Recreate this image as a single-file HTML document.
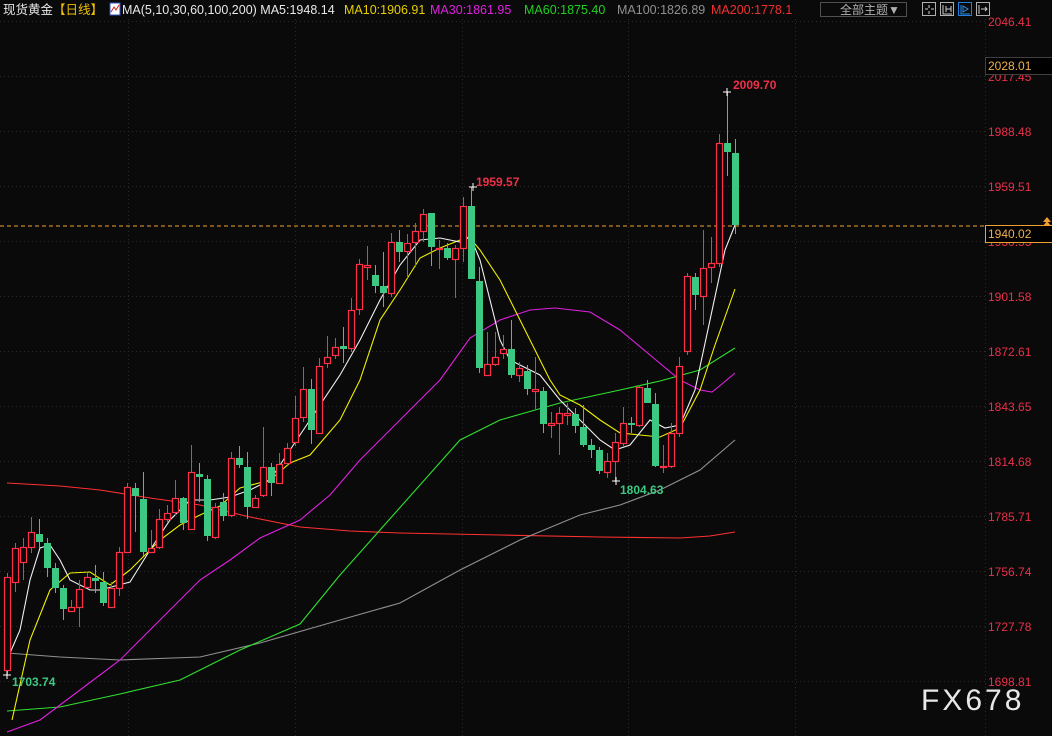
<!DOCTYPE html>
<html><head><meta charset="utf-8">
<style>
html,body{margin:0;padding:0;background:#0a0a0a;width:1052px;height:736px;overflow:hidden}
svg{display:block}
text{font-family:"Liberation Sans","Noto Sans CJK SC",sans-serif}
</style></head>
<body>
<svg id="s" width="1052" height="736" xmlns="http://www.w3.org/2000/svg">
<rect width="1052" height="736" fill="#0a0a0a"/>
<g id="grid"></g>
<line x1="0" y1="226" x2="985" y2="226" stroke="#f0a030" stroke-dasharray="4,3" stroke-width="1"/>
<g id="ma"></g>
<g id="c"></g>
<!-- header -->
<rect x="0" y="0" width="1052" height="19" fill="#0a0a0a"/>
<text x="3" y="14" font-size="12.5" fill="#e8e8e8">现货黄金</text>
<text x="53" y="14" font-size="12.5" fill="#f0c000">【日线】</text>
<rect x="110" y="3" width="10" height="12" fill="#fff" stroke="#3050c0"/>
<polyline points="111,12 114,7 116,10 119,5" fill="none" stroke="#d02020" stroke-width="1"/>
<text x="122" y="14" font-size="12.5" fill="#e8e8e8">MA(5,10,30,60,100,200) MA5:1948.14</text>
<text x="344" y="14" font-size="12.5" fill="#e8d000">MA10:1906.91</text>
<text x="430" y="14" font-size="12.5" fill="#e020e0">MA30:1861.95</text>
<text x="524" y="14" font-size="12.5" fill="#20d020">MA60:1875.40</text>
<text x="617" y="14" font-size="12.5" fill="#909090">MA100:1826.89</text>
<text x="711" y="14" font-size="12.5" fill="#f03030">MA200:1778.1</text>
<rect x="820.5" y="2.5" width="86" height="14" fill="#0a0a0a" stroke="#505050"/>
<text x="840" y="14" font-size="12" fill="#b0b0b0">全部主题▼</text>
<rect x="922.5" y="2.5" width="13" height="13" fill="none" stroke="#b0b0b0"/>
<path d="M929 5v3M929 11v3M925 9h3M931 9h3" stroke="#ccc"/>
<rect x="940.5" y="2.5" width="13" height="13" fill="none" stroke="#b0b0b0"/>
<path d="M943 5v9h9M946 6v6M951 6v6M946 9h5" stroke="#ccc" fill="none"/>
<rect x="958.5" y="2.5" width="13" height="13" fill="none" stroke="#2080e0"/>
<path d="M961 5v9h9M963 6l5 3-5 3z" stroke="#2a90f0" fill="none"/>
<rect x="976.5" y="2.5" width="13" height="13" fill="none" stroke="#b0b0b0"/>
<path d="M979 5v9M981 9h6M985 7l2 2-2 2" stroke="#ccc" fill="none"/>
<!-- axis -->
<g font-size="12" fill="#e8304a" id="ax"></g>
<rect x="985.5" y="57.5" width="67" height="17" fill="#000" stroke="#404040"/>
<text x="988" y="70" font-size="12" fill="#f0b050">2028.01</text>
<rect x="985.5" y="225.5" width="67" height="17" fill="#000" stroke="#f0a030"/>
<text x="988" y="238" font-size="12" fill="#f0b050">1940.02</text>
<path d="M1043 222l4-5 4 5zM1043 226l4-5 4 5z" fill="#f0a030"/>
<!-- annotations -->
<text x="12" y="686" font-size="12" font-weight="bold" fill="#3cc882">1703.74</text>
<text x="476" y="186" font-size="12" font-weight="bold" fill="#f03048">1959.57</text>
<text x="620" y="494" font-size="12" font-weight="bold" fill="#3cc882">1804.63</text>
<text x="733" y="89" font-size="12" font-weight="bold" fill="#f03048">2009.70</text>
<path d="M3 675h8M7 671v8M469 187h8M473 183v8M612 481h8M616 477v8M723 92h8M727 88v8" stroke="#fff" stroke-width="1"/>
<text x="921" y="710" font-size="30" fill="#e8e8e8" letter-spacing="3">FX678</text>
</svg>
<script>
var NS="http://www.w3.org/2000/svg";
function el(p,t,a){var e=document.createElementNS(NS,t);for(var k in a)e.setAttribute(k,a[k]);p.appendChild(e);return e;}
var g=document.getElementById('grid');
for(var i=0;i<13;i++){var y=22+55*i;el(g,'line',{x1:0,y1:y-0.5,x2:985,y2:y-0.5,stroke:'#2a2a2a','stroke-dasharray':'1,3'});}
[128,295,462,628,795].forEach(function(x){el(g,'line',{x1:x+.5,y1:19,x2:x+.5,y2:736,stroke:'#2a2a2a','stroke-dasharray':'1,3'});});
el(g,'line',{x1:985.5,y1:19,x2:985.5,y2:736,stroke:'#2a2a2a','stroke-dasharray':'1,3'});
var ax=document.getElementById('ax');
var labs=["2046.41","2017.45","1988.48","1959.51","1930.55","1901.58","1872.61","1843.65","1814.68","1785.71","1756.74","1727.78","1698.81"];
labs.forEach(function(l,i){var t=el(ax,'text',{x:988,y:26+55*i});t.textContent=l;});
// [bodyTop, bodyBot, high, low, up?]
var C=[[577,670,573,675,1],[548,582,543,592,1],[547,562,538,580,1],[532,547,517,553,1],[534,542,519,548,0],[543,568,538,577,0],[568,588,563,593,0],[588,609,585,620,0],[607,611,600,612,1],[589,607,580,627,1],
[577,587,573,588,1],[578,581,565,593,0],[582,603,572,606,0],[588,607,582,607,1],[552,588,547,596,1],[487,552,483,553,1],[488,496,483,532,0],[499,552,472,556,0],[548,552,530,553,1],[519,547,509,549,1],
[513,519,505,522,1],[498,512,480,515,1],[498,523,497,530,0],[472,529,445,530,1],[474,477,463,502,0],[479,536,475,541,0],[507,537,503,539,1],[502,516,493,521,0],[458,515,452,517,1],[458,465,446,468,0],
[467,507,452,519,0],[498,507,495,507,1],[467,495,427,497,1],[467,483,463,496,0],[464,483,453,484,1],[448,463,443,465,1],[418,442,396,446,1],[389,417,367,422,1],[389,430,379,444,0],[366,433,358,433,1],
[357,363,336,368,1],[347,355,338,359,1],[346,349,327,363,0],[310,348,298,352,1],[264,309,259,315,1],[265,267,246,280,1],[275,286,265,293,0],[286,293,252,307,0],[242,293,233,297,1],[242,252,230,262,0],
[243,251,234,278,1],[231,242,223,267,1],[214,231,209,242,1],[213,247,213,266,0],[248,249,240,269,1],[248,258,243,260,0],[248,259,245,298,1],[206,248,197,262,1],[206,279,187,262,0],[281,368,267,373,0],
[364,375,332,375,1],[357,364,332,366,1],[349,353,335,359,1],[349,375,320,378,0],[368,375,362,382,1],[371,389,365,395,0],[389,391,357,409,1],[391,424,387,433,0],[423,425,412,438,1],[413,423,407,455,1],
[413,415,403,425,1],[414,426,408,433,0],[427,445,405,447,0],[445,450,439,458,0],[450,471,447,474,0],[461,472,453,478,1],[442,461,433,482,1],[423,443,407,447,1],[423,424,417,433,0],[387,425,385,427,1],
[388,403,380,403,0],[404,466,393,467,0],[466,467,445,473,1],[433,466,423,468,1],[366,433,357,437,1],[276,351,273,355,1],[277,295,273,310,0],[268,296,230,325,1],[263,267,237,283,1],[143,263,134,267,1],
[143,152,92,176,0],[153,225,139,234,0]];
var cg=document.getElementById('c');
C.forEach(function(d,i){var x=7+8*i;var col=d[4]?'#ff3048':'#3cc882';
 if(d[4]){
  el(cg,'line',{x1:x+.5,y1:d[2],x2:x+.5,y2:d[0],stroke:col});
  el(cg,'line',{x1:x+.5,y1:d[1],x2:x+.5,y2:d[3],stroke:col});
  el(cg,'rect',{x:x-2.5,y:d[0]+.5,width:6,height:Math.max(1,d[1]-d[0]),fill:'#0a0a0a',stroke:col,'stroke-width':1.2});
 } else {
  el(cg,'line',{x1:x+.5,y1:d[2],x2:x+.5,y2:d[3],stroke:col});
  el(cg,'rect',{x:x-3,y:d[0],width:7,height:Math.max(2,d[1]-d[0]),fill:col});
 }
});
var mg=document.getElementById('ma');
function pl(pts,c){el(mg,'polyline',{points:pts,fill:'none',stroke:c,'stroke-width':1.1});}
pl("7,483 60,486 100,490 150,498 200,505 250,517 300,527 350,531 400,533 500,535 600,537 680,538 710,536 735,532","#ff3030");
pl("7,653 60,657 120,660 200,657 260,643 340,620 400,603 460,570 520,540 580,515 620,505 660,490 700,470 735,440","#909090");
pl("7,711 60,707 120,694 180,680 240,650 300,624 340,575 380,530 420,485 460,440 500,420 560,403 620,390 660,381 700,370 735,348","#30e030");
pl("7,732 40,720 80,690 120,660 160,620 200,580 230,560 260,538 300,520 330,495 360,460 400,420 440,380 470,338 500,320 530,310 555,308 590,312 620,330 650,355 680,380 700,390 712,392 722,384 735,373","#e020e0");
pl("12,720 30,640 50,590 70,573 90,572 110,585 130,570 160,540 180,525 200,515 220,506 240,488 270,480 290,463 310,455 340,420 360,380 380,320 400,290 420,258 440,248 460,240 470,238 480,250 500,280 520,320 540,360 550,380 560,395 580,405 600,420 620,433 640,435 660,437 680,428 700,390 715,345 735,289","#f0f000");
pl("7,660 20,630 30,580 40,548 50,545 60,560 70,580 90,590 100,590 130,582 150,550 170,520 190,500 210,500 230,497 250,490 270,480 290,450 310,420 340,375 360,340 380,300 400,265 420,240 440,238 460,242 470,236 480,260 490,300 500,340 510,360 520,365 540,375 560,400 580,420 600,440 615,450 630,445 650,420 665,428 680,425 695,390 710,320 725,250 735,225","#f0f0f0");
</script>
</body></html>
